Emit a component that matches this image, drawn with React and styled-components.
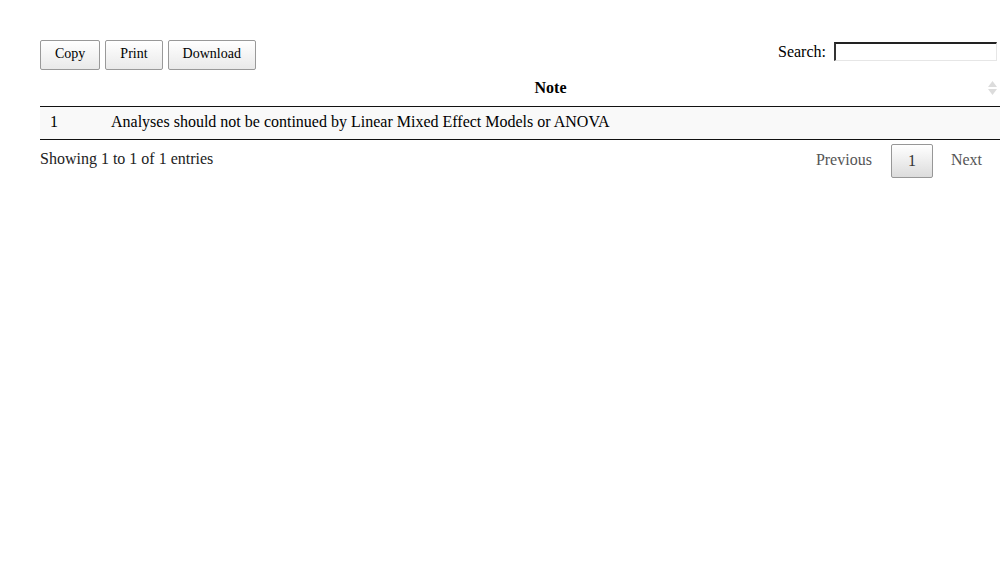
import React from 'react'
import styled, { createGlobalStyle } from 'styled-components'

const GlobalStyle = createGlobalStyle`
    body {
        margin: 0;
        background: #fff;
        font-family: "Liberation Serif", "Times New Roman", serif;
        color: #000;
    }
`

const Wrapper = styled.div`
    padding: 40px 0 0 40px;
    width: 960px;
`

const Top = styled.div`
    display: flex;
    justify-content: space-between;
    align-items: flex-start;
    height: 32px;
`

const Buttons = styled.div`
    display: flex;
    gap: 5px;
`

const Button = styled.button`
    height: 30px;
    padding: 0 ${p => p.pad || 14}px 2px;
    font-family: "Liberation Serif", "Times New Roman", serif;
    font-size: 14px;
    color: #000;
    border: 1px solid #999;
    border-radius: 2px;
    background: linear-gradient(to bottom, #ffffff 0%, #e9e9e9 100%);
    cursor: pointer;
`

const Search = styled.label`
    display: flex;
    align-items: center;
    gap: 8px;
    font-size: 16px;
    margin-right: 3px;
    margin-top: 2px;

    input {
        box-sizing: border-box;
        width: 163px;
        height: 19px;
        border: 2px inset #e6e6e6;
        border-top-color: #777;
        border-left-color: #888;
        border-right-width: 1px;
        border-bottom-width: 1px;
        padding: 0;
        margin: 0;
        background: #fff;
    }
`

const Table = styled.table`
    width: 960px;
    border-collapse: collapse;
    font-size: 16px;
`

const Th = styled.th`
    position: relative;
    height: 31px;
    padding: 0 ${p => p.pad || 18}px 3px;
    font-weight: bold;
    text-align: center;
    border-bottom: 1px solid #111;
    width: ${p => p.w || 'auto'};
`

const SortIcon = styled.svg`
    position: absolute;
    right: 3px;
    top: 9px;
`

const Td = styled.td`
    height: 30px;
    padding: 0 10px 2px;
    background: #f9f9f9;
    border-bottom: 1px solid #111;
    text-align: left;
`

const Bottom = styled.div`
    display: flex;
    justify-content: space-between;
    align-items: flex-start;
    padding-top: 4px;
`

const Info = styled.div`
    font-size: 16px;
    padding-top: 6px;
    color: #222;
`

const Paging = styled.div`
    display: flex;
    align-items: center;
    font-size: 16px;
`

const PageLink = styled.span`
    padding: 0 ${p => p.pad || 19}px 3px;
    color: #555;
`

const PageButton = styled.span`
    display: flex;
    align-items: center;
    justify-content: center;
    width: 40px;
    height: 32px;
    border: 1px solid #979797;
    border-radius: 2px;
    background: linear-gradient(to bottom, #ffffff 0%, #dcdcdc 100%);
    color: #333;
`

const App = () => {
    return (
        <Wrapper>
            <GlobalStyle />
            <Top>
                <Buttons>
                    <Button pad={14}>Copy</Button>
                    <Button pad={14}>Print</Button>
                    <Button pad={14}>Download</Button>
                </Buttons>
                <Search>
                    Search:
                    <input type="text" />
                </Search>
            </Top>
            <Table>
                <thead>
                    <tr>
                        <Th w="41px" pad={10}></Th>
                        <Th>
                            Note
                            <SortIcon width="9" height="14" viewBox="0 0 9 14">
                                <path d="M4.5 0 L9 6 H0 Z" fill="#dcdcdc" />
                                <path d="M0 8 H9 L4.5 14 Z" fill="#dcdcdc" />
                            </SortIcon>
                        </Th>
                    </tr>
                </thead>
                <tbody>
                    <tr>
                        <Td>1</Td>
                        <Td>Analyses should not be continued by Linear Mixed Effect Models or ANOVA</Td>
                    </tr>
                </tbody>
            </Table>
            <Bottom>
                <Info>Showing 1 to 1 of 1 entries</Info>
                <Paging>
                    <PageLink pad={19}>Previous</PageLink>
                    <PageButton>1</PageButton>
                    <PageLink pad={18}>Next</PageLink>
                </Paging>
            </Bottom>
        </Wrapper>
    )
}

export default App
